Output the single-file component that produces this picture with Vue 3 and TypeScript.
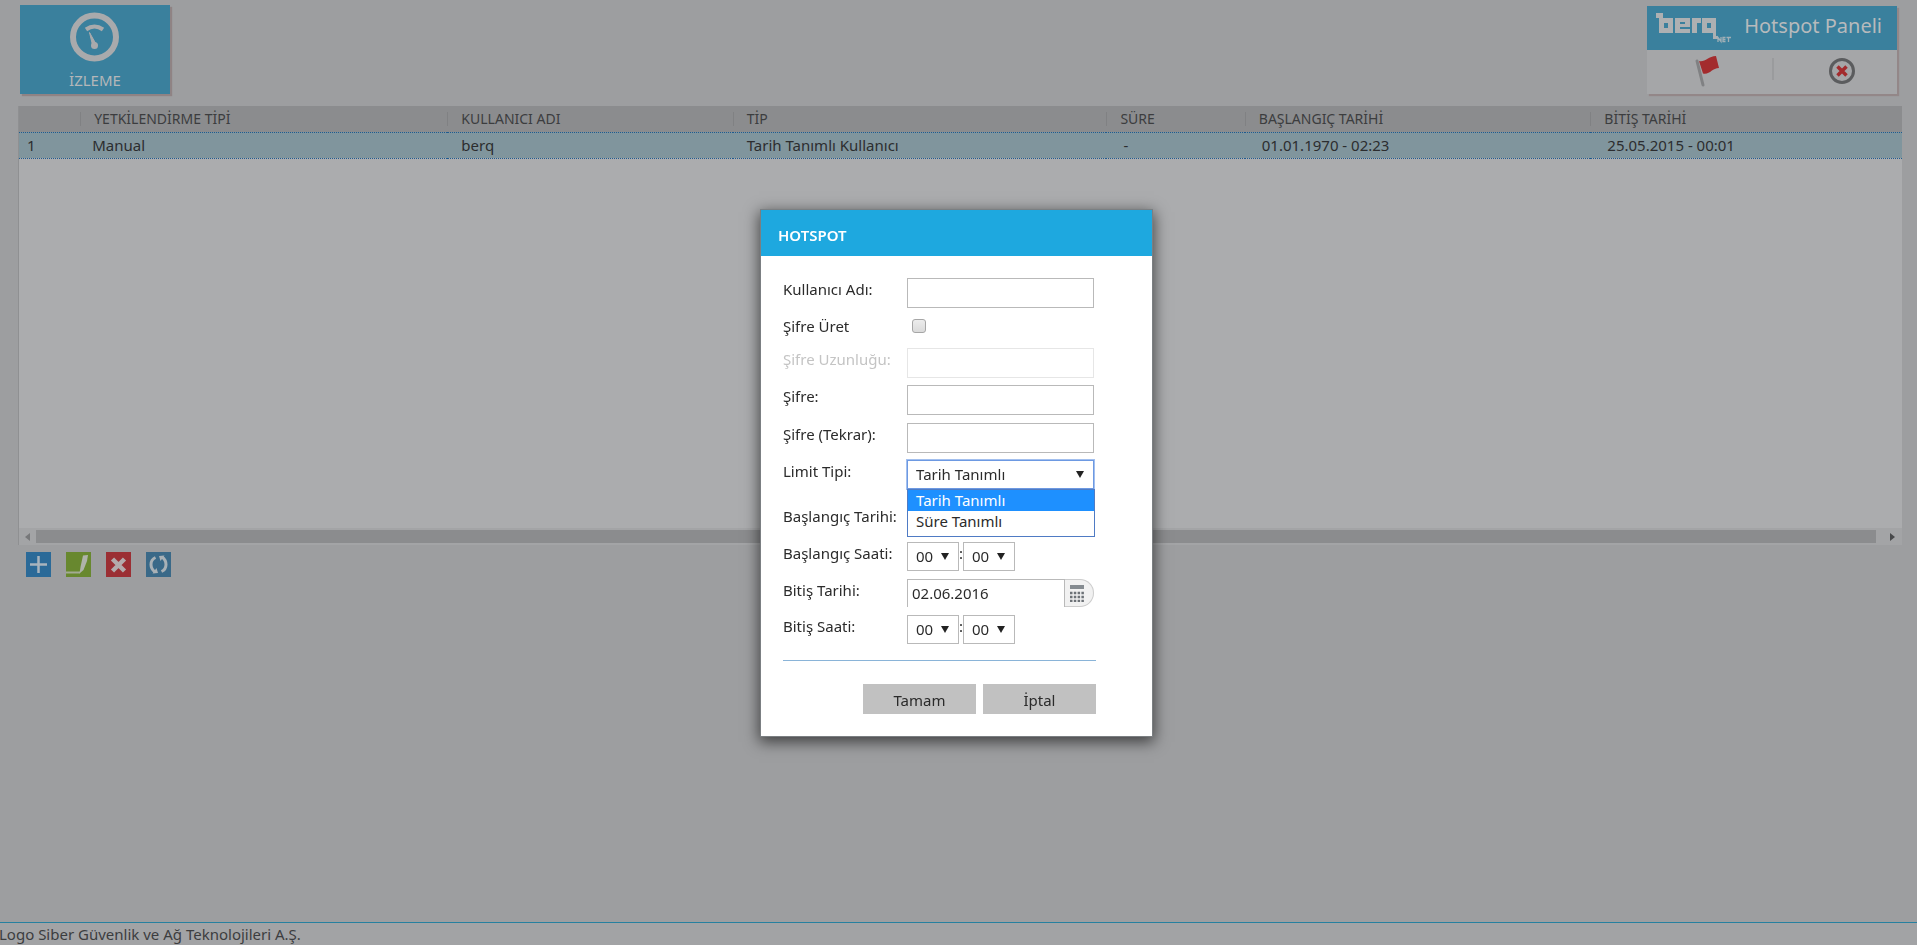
<script setup lang="ts">
import { ref } from 'vue'

interface Session {
  type: string
  user: string
  kind: string
  duration: string
  start: string
  end: string
}

const sessions: Session[] = [
  {
    type: 'Manual',
    user: 'berq',
    kind: 'Tarih Tanımlı Kullanıcı',
    duration: '-',
    start: '01.01.1970 - 02:23',
    end: '25.05.2015 - 00:01',
  },
]

const limitTypes = ['Tarih Tanımlı', 'Süre Tanımlı']
const limitType = ref('Tarih Tanımlı')
const limitOpen = ref(true)
const userName = ref('')
const generate = ref(false)
const passwordLength = ref('')
const password = ref('')
const passwordRepeat = ref('')
const startDate = ref('')
const endDate = ref('02.06.2016')
const startHour = ref('00')
const startMinute = ref('00')
const endHour = ref('00')
const endMinute = ref('00')

const pad = (n: number): string => String(n).padStart(2, '0')
const hours = Array.from({ length: 24 }, (_, i) => pad(i))
const minutes = Array.from({ length: 60 }, (_, i) => pad(i))

function pick(value: string): void {
  limitType.value = value
  limitOpen.value = false
}
</script>

<template>
  <div class="page">
    <header class="top">
      <button class="tile" type="button">
        <svg class="gauge" viewBox="0 0 50 50" aria-hidden="true">
          <circle cx="24.500" cy="25" r="21.500" fill="none" stroke="#a9aaac" stroke-width="6" />
          <path d="M16 17.500Q24.500 11.500 33 17.500" fill="none" stroke="#a9aaac" stroke-width="4" />
          <path d="M19.500 20.500L22.500 33L26 32Z" fill="#a9aaac" stroke="#a9aaac" stroke-width="1" />
          <circle cx="24.500" cy="33.500" r="3.500" fill="#a9aaac" />
        </svg>
        <span>İZLEME</span>
      </button>

      <section class="brand">
        <div class="brand-head">
          <svg class="logo" viewBox="0 0 76 32" role="img" aria-label="berq net">
            <g fill="#adb0b2" fill-rule="evenodd">
              <path d="M1 1H8V6H18V21H4V6H1ZM9 11V16H13V11Z" />
              <path d="M20 6H35V15H25V17H35V21H20ZM25 10V12H30V10Z" />
              <path d="M37 6H46V11H42V21H37Z" />
              <path d="M47 6H61V24H63V27H58V21H47ZM52 11V16H56V11Z" />
            </g>
            <path
              d="M63 30V25.500L66 29.500V25M70.500 25.500H68V29.500H70.500M68 27.500H70.500M71.500 25.500H76M73.500 25.500V30"
              fill="none" stroke="#a0afb6" stroke-width="1.300"
            />
          </svg>
          <span class="brand-title">Hotspot Paneli</span>
        </div>
        <div class="brand-actions">
          <button type="button" aria-label="Dil">
            <svg width="28" height="32" viewBox="0 0 28 32" aria-hidden="true">
              <path d="M3 6L9 30" stroke="#808183" stroke-width="3" stroke-linecap="round" />
              <path d="M5 6C11 7.500 14 1.500 22 1L25 13C18 13 16 20 9 18.500Z" fill="#a32b2d" />
            </svg>
          </button>
          <button type="button" aria-label="Çıkış">
            <svg width="26" height="26" viewBox="0 0 26 26" aria-hidden="true">
              <circle cx="13" cy="13" r="11.500" fill="none" stroke="#5b5c5e" stroke-width="3" />
              <path d="M8.500 8.500L17.500 17.500M17.500 8.500L8.500 17.500" stroke="#a32b2d" stroke-width="3.500" />
            </svg>
          </button>
        </div>
      </section>
    </header>

    <main>
      <div class="grid">
        <table>
          <colgroup>
            <col class="c-no" /><col class="c-type" /><col class="c-user" /><col class="c-kind" />
            <col class="c-dur" /><col class="c-start" /><col />
          </colgroup>
          <thead>
            <tr>
              <th aria-label="No"></th>
              <th>YETKİLENDİRME TİPİ</th>
              <th>KULLANICI ADI</th>
              <th>TİP</th>
              <th>SÜRE</th>
              <th>BAŞLANGIÇ TARİHİ</th>
              <th>BİTİŞ TARİHİ</th>
            </tr>
          </thead>
          <tbody>
            <tr v-for="(s, i) in sessions" :key="i">
              <td class="no">{{ i + 1 }}</td>
              <td class="type">{{ s.type }}</td>
              <td>{{ s.user }}</td>
              <td>{{ s.kind }}</td>
              <td class="when">{{ s.duration }}</td>
              <td class="when">{{ s.start }}</td>
              <td class="when">{{ s.end }}</td>
            </tr>
          </tbody>
        </table>
        <div class="scroll">
          <svg width="5" height="8" viewBox="0 0 5 8" aria-hidden="true"><path d="M5 0V8L0 4Z" fill="#77787a" /></svg>
          <div class="thumb"></div>
          <svg width="5" height="8" viewBox="0 0 5 8" aria-hidden="true"><path d="M0 0V8L5 4Z" fill="#48494b" /></svg>
        </div>
      </div>

      <div class="tools">
        <button type="button" aria-label="Ekle">
          <svg viewBox="0 0 25 25" aria-hidden="true">
            <rect width="25" height="25" fill="#2b6a98" />
            <path d="M12.500 4V21M4 12.500H21" stroke="#a9b4bd" stroke-width="2.500" />
          </svg>
        </button>
        <button type="button" aria-label="Düzenle">
          <svg viewBox="0 0 25 25" aria-hidden="true">
            <rect width="25" height="25" fill="#68882f" />
            <path d="M0 20.500H14" fill="none" stroke="#a3ab92" stroke-width="2" />
            <path d="M17 3.500L22 3L21 9L17.500 18L13.500 21.500L14.500 15Z" fill="#afb3aa" />
          </svg>
        </button>
        <button type="button" aria-label="Sil">
          <svg viewBox="0 0 25 25" aria-hidden="true">
            <rect width="25" height="25" fill="#9b2f34" />
            <path d="M6.500 7L18.500 19M18.500 7L6.500 19" stroke="#b3abac" stroke-width="4.500" />
          </svg>
        </button>
        <button type="button" aria-label="Yenile">
          <svg viewBox="0 0 25 25" aria-hidden="true">
            <rect width="25" height="25" fill="#3a6988" />
            <path d="M9.500 5.500Q5 7.500 5 12.500Q5 17 9 20M15.500 19.500Q20 17.500 20 12.500Q20 8 16 5" fill="none" stroke="#a9b1b6" stroke-width="3" />
            <path d="M6.500 21.500L12 21L10.500 16ZM18.500 3.500L13 4L14.500 9Z" fill="#a9b1b6" />
          </svg>
        </button>
      </div>
    </main>

    <footer class="foot"><span>Logo Siber Güvenlik ve Ağ Teknolojileri A.Ş.</span></footer>

    <div class="overlay">
      <form class="dialog" role="dialog" aria-labelledby="dlg-title" @submit.prevent>
        <h2 id="dlg-title">HOTSPOT</h2>
        <div class="body">
          <div class="row">
            <label for="user">Kullanıcı Adı:</label>
            <input id="user" v-model="userName" class="text" type="text" />
          </div>
          <div class="row short">
            <label for="gen">Şifre Üret</label>
            <input id="gen" v-model="generate" class="check" type="checkbox" />
          </div>
          <div class="row off">
            <label for="len">Şifre Uzunluğu:</label>
            <input id="len" v-model="passwordLength" class="text" type="text" disabled />
          </div>
          <div class="row loose">
            <label for="pw">Şifre:</label>
            <input id="pw" v-model="password" class="text" type="password" />
          </div>
          <div class="row">
            <label for="pw2">Şifre (Tekrar):</label>
            <input id="pw2" v-model="passwordRepeat" class="text" type="password" />
          </div>
          <div class="row tall">
            <label for="limit">Limit Tipi:</label>
            <div class="combo">
              <select id="limit" v-model="limitType">
                <option v-for="t in limitTypes" :key="t">{{ t }}</option>
              </select>
              <ul v-if="limitOpen" role="listbox" aria-label="Limit Tipi">
                <li
                  v-for="t in limitTypes"
                  :key="t"
                  role="option"
                  :aria-selected="t === limitType"
                  :class="{ active: t === limitType }"
                  @click="pick(t)"
                >{{ t }}</li>
              </ul>
            </div>
          </div>
          <div class="row">
            <label for="sdate">Başlangıç Tarihi:</label>
            <div class="date"><input id="sdate" v-model="startDate" type="text" /></div>
          </div>
          <div class="row">
            <label for="sh">Başlangıç Saati:</label>
            <div class="time">
              <select id="sh" v-model="startHour"><option v-for="h in hours" :key="h">{{ h }}</option></select>
              <span>:</span>
              <select v-model="startMinute" aria-label="Başlangıç dakikası"><option v-for="m in minutes" :key="m">{{ m }}</option></select>
            </div>
          </div>
          <div class="row tight">
            <label for="edate">Bitiş Tarihi:</label>
            <div class="date">
              <input id="edate" v-model="endDate" type="text" />
              <button type="button" aria-label="Takvim">
                <svg width="14" height="17" viewBox="0 0 14 17" aria-hidden="true">
                  <rect width="14" height="4" fill="#858b90" />
                  <path d="M0 8H14M0 12H14M0 16H14" stroke="#6d7277" stroke-width="2.500" stroke-dasharray="2.500 1.300" />
                </svg>
              </button>
            </div>
          </div>
          <div class="row">
            <label for="eh">Bitiş Saati:</label>
            <div class="time">
              <select id="eh" v-model="endHour"><option v-for="h in hours" :key="h">{{ h }}</option></select>
              <span>:</span>
              <select v-model="endMinute" aria-label="Bitiş dakikası"><option v-for="m in minutes" :key="m">{{ m }}</option></select>
            </div>
          </div>
          <div class="buttons">
            <button type="submit">Tamam</button>
            <button type="button">İptal</button>
          </div>
        </div>
      </form>
    </div>
  </div>
</template>

<style>
body {
  margin: 0;
  background: #9d9ea0;
}
</style>

<style scoped>
* {
  box-sizing: border-box;
}
.page {
  display: flex;
  flex-direction: column;
  min-height: 100vh;
  font: 15px/20px "Noto Sans", "Open Sans", sans-serif;
  color: #2c2d2f;
}
button,
input,
select {
  font: inherit;
  color: inherit;
  margin: 0;
  padding: 0;
  border: 0;
  border-radius: 0;
  background: none;
}
svg {
  display: block;
}
.top {
  display: flex;
  justify-content: space-between;
  padding: 5px 20px 12px;
}
.tile {
  display: flex;
  flex-direction: column;
  align-items: center;
  gap: 8px;
  width: 150px;
  height: 89px;
  padding-top: 7px;
  background: #3a809d;
  box-shadow: 2px 2px 1px #8f8384;
  color: #b4b7b9;
}
.gauge {
  width: 50px;
  height: 50px;
}
.brand {
  width: 250px;
  margin-top: 1px;
  background: #a5a6a8;
  box-shadow: 2px 2px 1px #938788;
}
.brand-head {
  display: flex;
  justify-content: space-between;
  height: 44px;
  padding: 6px 15px 0 8px;
  background: #3a809d;
}
.logo {
  width: 76px;
  height: 32px;
}
.brand-title {
  font-size: 20px;
  line-height: 28px;
  color: #b7babc;
}
.brand-actions {
  display: grid;
  grid-template-columns: 1fr 1fr;
  height: 44px;
  padding: 5px 0 7px;
}
.brand-actions button {
  display: flex;
  align-items: center;
  justify-content: center;
}
.brand-actions button:first-child {
  padding-right: 3px;
}
.brand-actions button + button {
  padding-left: 14px;
  background: linear-gradient(#9a9b9d, #9a9b9d) 0 3px / 2px 22px no-repeat;
}
.grid {
  display: flex;
  flex-direction: column;
  justify-content: space-between;
  height: 439px;
  margin: 0 15px 0 18px;
  border-left: 1px solid #8f9092;
  background: #abacae;
}
table {
  width: 100%;
  table-layout: fixed;
  border-collapse: collapse;
}
.c-no { width: 3.25%; }
.c-type { width: 19.5%; }
.c-user { width: 15.15%; }
.c-kind { width: 19.85%; }
.c-dur { width: 7.35%; }
.c-start { width: 18.35%; }
th,
td {
  height: 26px;
  padding: 0 0 0 14px;
  text-align: left;
  font-weight: 400;
  white-space: nowrap;
}
th {
  background: linear-gradient(#808183, #808183) 0 50% / 1px 14px no-repeat #8b8c8e;
  font-size: 14px;
  color: #3c3d3f;
}
th:first-child {
  background: #8b8c8e;
}
td {
  border-top: 1px dotted #1f5b90;
  border-bottom: 1px dotted #1f5b90;
  background: #80959d;
}
td.no {
  padding-left: 8px;
}
td.type {
  padding-left: 12px;
}
td.when {
  padding-left: 17px;
}
.scroll {
  display: flex;
  align-items: center;
  gap: 6px;
  height: 17px;
  padding: 0 7px 0 6px;
  background: #a3a4a6;
}
.thumb {
  flex: 1;
  height: 13px;
  margin-right: 8px;
  background: #8b8c8e;
}
.tools {
  display: flex;
  gap: 15px;
  padding: 7px 26px;
}
.tools button,
.tools svg {
  width: 25px;
  height: 25px;
}
.foot {
  margin-top: auto;
  height: 23px;
  border-top: 1px solid #26809f;
  line-height: 22px;
  background: #a2a3a5;
  color: #3c3d3f;
}
.foot span {
  margin-left: -1px;
}
.overlay {
  position: fixed;
  inset: 0;
  display: flex;
  align-items: center;
  justify-content: center;
  padding-right: 4px;
}
.dialog {
  width: 391px;
  background: #fff;
  color: #2b2b2b;
  box-shadow: 0 0 0 1px #7b7f82, 0 4px 14px 2px rgba(0, 0, 0, 0.6);
}
.dialog h2 {
  margin: 0;
  padding: 4px 0 0 17px;
  font-size: 15px;
  line-height: 42px;
  font-weight: 600;
  background: #1ea8df;
  color: #fff;
}
.body {
  padding: 22px 56px 22px 22px;
}
.row {
  display: grid;
  grid-template-columns: 124px 187px;
  align-items: start;
  height: 37px;
}
.row.short {
  height: 33px;
}
.row.loose {
  height: 38px;
}
.row.tight {
  height: 36px;
}
.row.tall {
  height: 45px;
}
.row label {
  line-height: 22px;
  white-space: nowrap;
}
.off label {
  color: #c4c4c4;
}
.text {
  width: 100%;
  height: 30px;
  padding: 0 4px;
  border: 1px solid #b9b9b9;
}
.off .text {
  border-color: #e6e6e6;
}
.check {
  appearance: none;
  width: 14px;
  height: 14px;
  margin: 4px 0 0 5px;
  border: 1px solid #a6a6a6;
  border-radius: 3px;
  background: linear-gradient(#ececec, #dadada);
}
select {
  appearance: none;
  height: 29px;
  padding: 0 0 0 8px;
  border: 1px solid #b9b9b9;
  background: #fff;
}
.combo,
.time {
  position: relative;
}
.combo select {
  width: 100%;
  border-color: #6d99e2;
  box-shadow: 0 0 0 1px #a3c0ef;
}
.combo::after,
.time::before,
.time::after {
  content: "";
  position: absolute;
  top: 11px;
  left: 34px;
  border: 4px solid transparent;
  border-top: 7px solid #222;
  border-bottom: 0;
  pointer-events: none;
}
.time::after {
  left: 90px;
}
.combo::after {
  left: auto;
  right: 10px;
}
.combo ul {
  position: absolute;
  z-index: 2;
  top: 29px;
  left: 0;
  right: -1px;
  margin: 0;
  padding: 0 0 4px;
  list-style: none;
  border: 1px solid #4f7bc4;
  background: #fff;
}
.combo li {
  padding-left: 8px;
  line-height: 21px;
}
.combo li.active {
  background: #1e90ff;
  color: #fff;
}
.time {
  display: flex;
}
.time select {
  width: 52px;
}
.time span {
  width: 4px;
  line-height: 22px;
}
.date {
  display: flex;
  height: 28px;
}
.date input {
  width: 158px;
  padding-left: 4px;
  border: 1px solid #b9b9b9;
  border-bottom: 0;
}
.date button {
  display: flex;
  align-items: center;
  padding: 1px 9px 0 5px;
  border: 1px solid #cccccc;
  border-left: 0;
  border-radius: 0 14px 14px 0;
  background: #f1f1f1;
}
.buttons {
  display: flex;
  justify-content: flex-end;
  gap: 7px;
  margin: 8px 0 0;
  padding-top: 23px;
  border-top: 1px solid #8ab4d8;
}
.buttons button {
  width: 113px;
  height: 30px;
  padding-top: 2px;
  background: #c1c1c1;
}
</style>
